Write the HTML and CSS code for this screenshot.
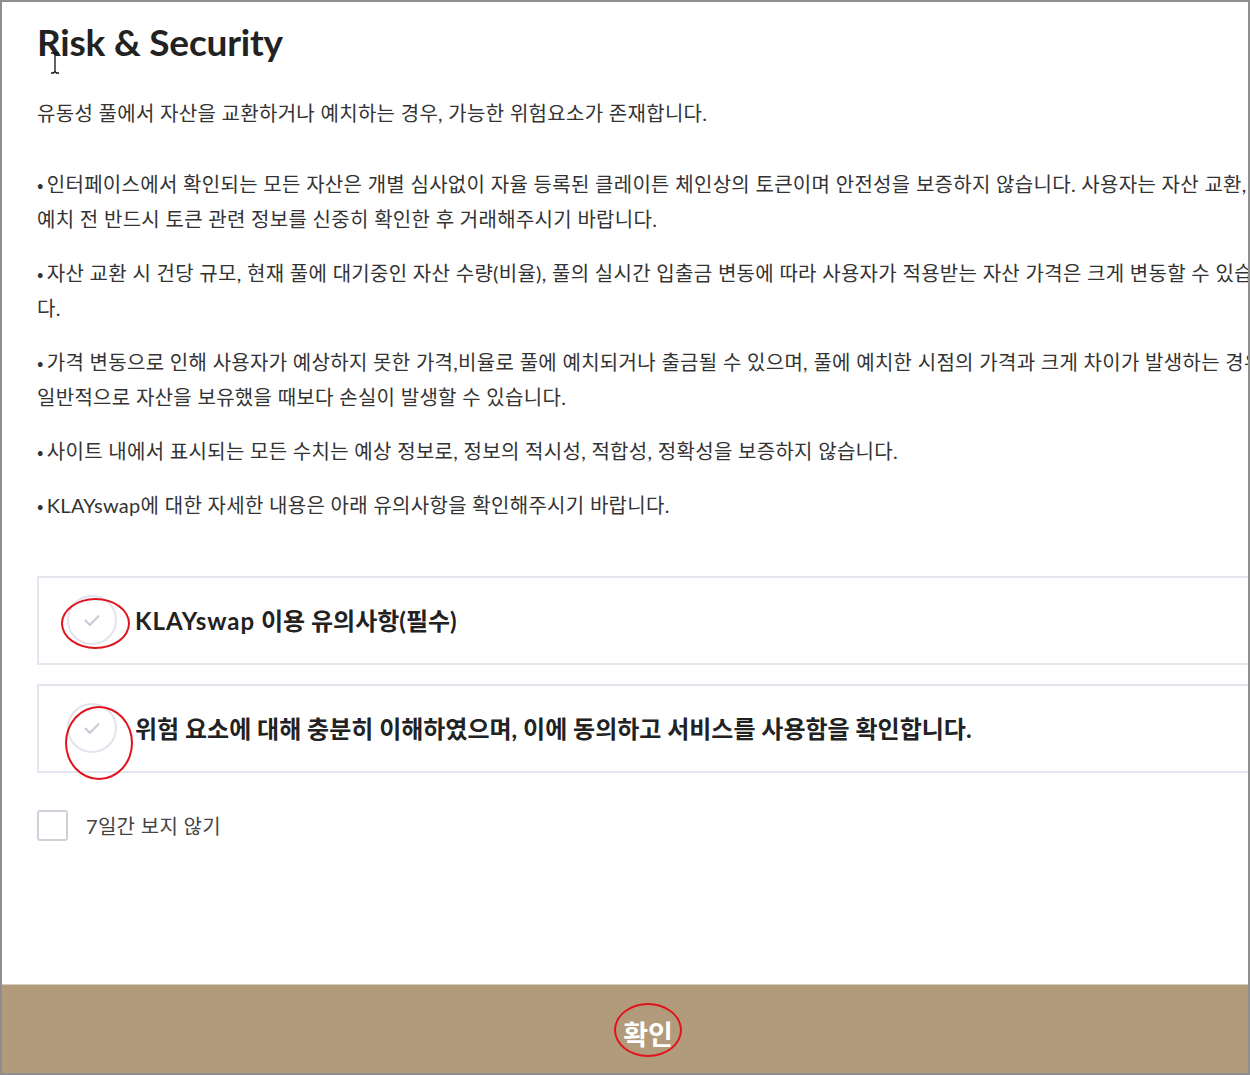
FILE: index.html
```html
<!DOCTYPE html>
<html lang="ko">
<head>
<meta charset="utf-8">
<title>Risk &amp; Security</title>
<link rel="stylesheet" href="styles.css">
</head>
<body>
<div class="frame">
  <div class="content">
    <h1 class="title">Risk &amp; Security</h1>
    <p class="intro">유동성 풀에서 자산을 교환하거나 예치하는 경우, 가능한 위험요소가 존재합니다.</p>
    <div class="notes">
      <p class="note"><span class="dot">•</span>인터페이스에서 확인되는 모든 자산은 개별 심사없이 자율 등록된 클레이튼 체인상의 토큰이며 안전성을 보증하지 않습니다. 사용자는 자산 교환,<br>예치 전 반드시 토큰 관련 정보를 신중히 확인한 후 거래해주시기 바랍니다.</p>
      <p class="note"><span class="dot">•</span>자산 교환 시 건당 규모, 현재 풀에 대기중인 자산 수량(비율), 풀의 실시간 입출금 변동에 따라 사용자가 적용받는 자산 가격은 크게 변동할 수 있습니<br>다.</p>
      <p class="note"><span class="dot">•</span>가격 변동으로 인해 사용자가 예상하지 못한 가격,비율로 풀에 예치되거나 출금될 수 있으며, 풀에 예치한 시점의 가격과 크게 차이가 발생하는 경우,<br>일반적으로 자산을 보유했을 때보다 손실이 발생할 수 있습니다.</p>
      <p class="note"><span class="dot">•</span>사이트 내에서 표시되는 모든 수치는 예상 정보로, 정보의 적시성, 적합성, 정확성을 보증하지 않습니다.</p>
      <p class="note"><span class="dot">•</span>KLAYswap에 대한 자세한 내용은 아래 유의사항을 확인해주시기 바랍니다.</p>
    </div>
    <div class="agree-list">
      <div class="agree">
        <span class="circle"><svg viewBox="0 0 24 24" class="check"><path d="M6 12.5l4 4 8-8" fill="none" stroke="#c9cdd7" stroke-width="2" stroke-linecap="round" stroke-linejoin="round"/></svg></span>
        <span class="agree-text"><span class="latin">KLAYswap</span> 이용 유의사항(필수)</span>
      </div>
      <div class="agree">
        <span class="circle"><svg viewBox="0 0 24 24" class="check"><path d="M6 12.5l4 4 8-8" fill="none" stroke="#c9cdd7" stroke-width="2" stroke-linecap="round" stroke-linejoin="round"/></svg></span>
        <span class="agree-text">위험 요소에 대해 충분히 이해하였으며, 이에 동의하고 서비스를 사용함을 확인합니다.</span>
      </div>
    </div>
    <label class="skip"><span class="box"></span><span class="skip-text">7일간 보지 않기</span></label>
  </div>
  <div class="bar"><span class="confirm">확인</span></div>
  <span class="mark mark-1"></span>
  <span class="mark mark-2"></span>
  <span class="mark mark-3"></span>
  <svg class="cursor" viewBox="0 0 10 22" width="10" height="22"><path d="M1 1h2.5l1.5 1.5L6.5 1H9M5 2.5v17M1 21h2.5l1.5-1.5 1.5 1.5H9" fill="none" stroke="#111" stroke-width="1.3"/></svg>
</div>
</body>
</html>
```

FILE: styles.css
```css
html, body {
  margin: 0;
  padding: 0;
  background: #ffffff;
}
.frame {
  position: relative;
  width: 1250px;
  height: 1075px;
  box-sizing: border-box;
  border: 2px solid #8e8e8e;
  display: flex;
  flex-direction: column;
  overflow: hidden;
  font-family: Lato, "Noto Sans CJK KR", sans-serif;
  color: #333333;
}
.content {
  flex: 1;
  width: 1400px;
  padding: 15px 0 0 35px;
  box-sizing: border-box;
}
.title {
  margin: 0;
  font-size: 37px;
  line-height: 50px;
  font-weight: 700;
  color: #222222;
  letter-spacing: -0.2px;
}
.intro {
  margin: 29px 0 0;
  font-size: 20px;
  letter-spacing: 0.3px;
  line-height: 35px;
  white-space: nowrap;
}
.notes {
  margin-top: 36px;
  display: flex;
  flex-direction: column;
  gap: 19px;
}
.note {
  margin: 0;
  font-size: 20px;
  letter-spacing: 0.3px;
  line-height: 35px;
  white-space: nowrap;
}
.dot {
  font-family: "Noto Sans CJK KR", sans-serif;
  font-size: 19px;
  line-height: 1;
  margin-right: 3px;
  margin-left: 0;
}
.agree-list {
  margin-top: 53px;
  display: flex;
  flex-direction: column;
  gap: 19px;
}
.agree {
  height: 89px;
  box-sizing: border-box;
  border: 2px solid #e3e6ef;
  display: flex;
  align-items: center;
  padding-left: 28px;
  padding-bottom: 2px;
  gap: 18px;
}
.circle {
  width: 50px;
  height: 50px;
  box-sizing: border-box;
  border: 2px solid #e1e4ec;
  border-radius: 50%;
  display: flex;
  align-items: center;
  justify-content: center;
  flex-shrink: 0;
}
.check {
  width: 26px;
  height: 26px;
}
.agree-text {
  font-size: 24px;
  font-weight: 700;
  color: #222222;
  white-space: nowrap;
}
.latin {
  letter-spacing: 1px;
}
.skip {
  margin-top: 37px;
  display: flex;
  align-items: center;
  gap: 18px;
}
.box {
  width: 31px;
  height: 31px;
  box-sizing: border-box;
  border: 2px solid #cdd1da;
  border-radius: 3px;
}
.skip-text {
  font-size: 20px;
  letter-spacing: 0.3px;
  color: #444444;
}
.bar {
  flex-shrink: 0;
  height: 88px;
  background: #b29b7b;
  border-top: 1px solid #d8cebf;
  display: flex;
  align-items: center;
  justify-content: center;
}
.confirm {
  color: #ffffff;
  font-size: 27px;
  font-weight: 700;
  margin-left: 46px;
  margin-top: 8px;
}
.mark {
  position: absolute;
  border: 2px solid #e0141e;
  border-radius: 50%;
  box-sizing: border-box;
}
.mark-1 { left: 59px; top: 596px; width: 69px; height: 51px; }
.mark-2 { left: 63px; top: 704px; width: 68px; height: 74px; }
.mark-3 { left: 612px; top: 1001px; width: 68px; height: 54px; }
.cursor {
  position: absolute;
  left: 48px;
  top: 50px;
}
```
